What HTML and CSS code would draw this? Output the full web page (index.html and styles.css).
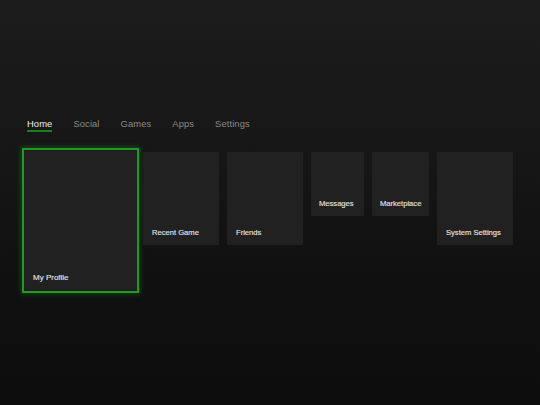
FILE: index.html
```html
<!DOCTYPE html>
<html>
<head>
<meta charset="utf-8">
<link rel="stylesheet" href="styles.css">
</head>
<body>
<div class="screen">
  <nav class="tabs">
    <span class="tab active">Home</span>
    <span class="tab">Social</span>
    <span class="tab">Games</span>
    <span class="tab">Apps</span>
    <span class="tab">Settings</span>
  </nav>
  <div class="tiles">
    <div class="tile focused"><span class="label">My Profile</span></div>
    <div class="tile wide"><span class="label">Recent Game</span></div>
    <div class="tile wide"><span class="label">Friends</span></div>
    <div class="tile small msg"><span class="label">Messages</span></div>
    <div class="tile small market"><span class="label">Marketplace</span></div>
    <div class="tile wide"><span class="label">System Settings</span></div>
  </div>
</div>
</body>
</html>
```
FILE: styles.css
```css
html, body {
  margin: 0;
  padding: 0;
  width: 540px;
  height: 405px;
  overflow: hidden;
}
body {
  background: linear-gradient(180deg, #1c1c1c 0%, #171717 35%, #101010 70%, #0d0d0d 100%);
  font-family: "Liberation Sans", Arial, sans-serif;
}
.screen {
  padding: 117px 0 0 27px;
}
.tabs {
  display: flex;
  gap: 21px;
  height: 16px;
}
.tab {
  font-size: 9.4px;
  line-height: 13px;
  color: #8a8a8a;
  letter-spacing: 0.1px;
  height: 13px;
}
.tab.active {
  color: #ededed;
  border-bottom: 2px solid #1f7d1f;
}
.tiles {
  display: flex;
  align-items: flex-start;
  gap: 8px;
  margin-top: 19px;
  margin-left: -1px;
}
.tile {
  background: #212121;
  box-sizing: border-box;
  display: flex;
  flex-direction: column;
  justify-content: flex-end;
  padding: 0 9px 8px;
}
.label {
  font-size: 7.6px;
  line-height: 9px;
  color: #e2e2e2;
  white-space: nowrap;
  -webkit-text-stroke: 0.15px #e2e2e2;
}
.wide {
  width: 76px;
  height: 93px;
}
.small {
  height: 64px;
  padding-left: 8px;
}
.msg { width: 53px; }
.market { width: 57px; }
.focused {
  width: 117px;
  height: 145px;
  margin: -4px -4px 0 -4px;
  border: 2px solid #1f9c1f;
  box-shadow: 0 0 5px 1px rgba(40, 190, 40, 0.3);
  padding: 0 9px 9px;
}
.focused .label {
  font-size: 8px;
}
```
